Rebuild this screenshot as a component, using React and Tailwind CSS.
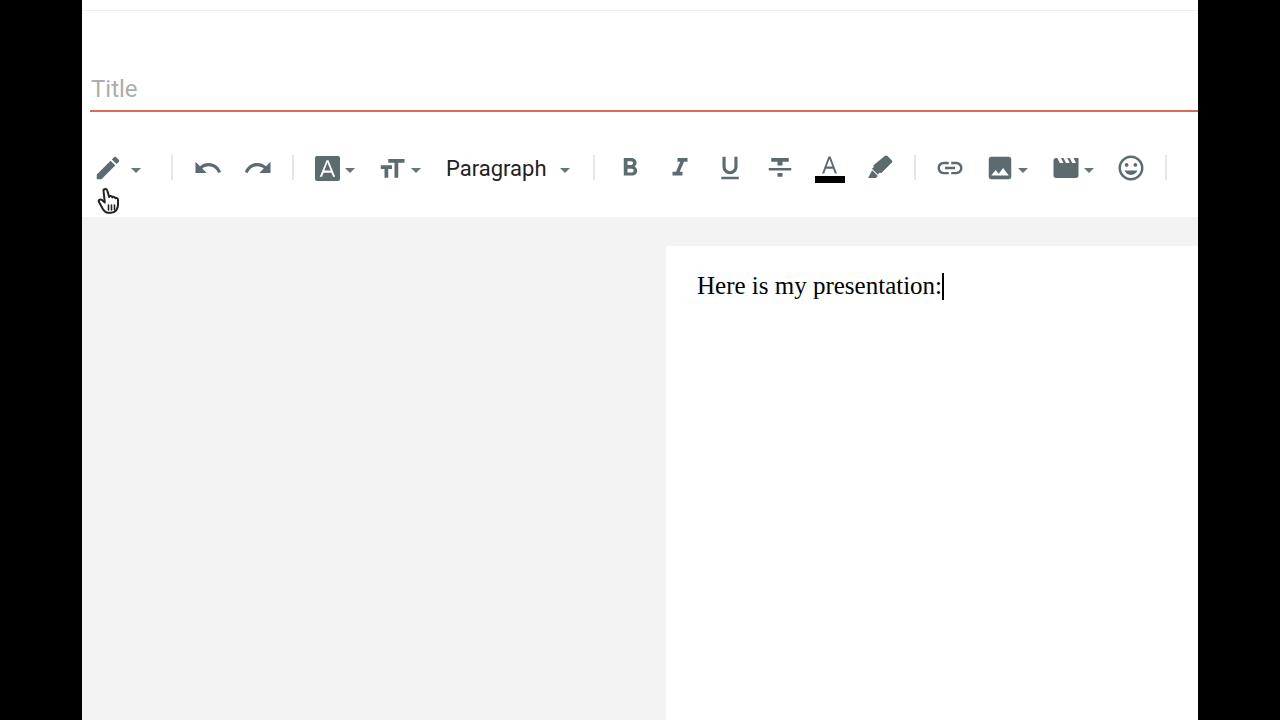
const ICON_COLOR = 'text-[#5b6b70]'

// material icon paths
const PATHS = {
  edit: 'M3 17.25V21h3.75L17.81 9.94l-3.75-3.75L3 17.25zM20.71 7.04c.39-.39.39-1.02 0-1.41l-2.34-2.34c-.39-.39-1.02-.39-1.41 0l-1.83 1.83 3.75 3.75 1.83-1.83z',
  undo: 'M12.5 8c-2.65 0-5.05.99-6.9 2.6L2 7v9h9l-3.62-3.62c1.39-1.16 3.16-1.88 5.12-1.88 3.54 0 6.55 2.31 7.6 5.5l2.37-.78C21.08 11.03 17.15 8 12.5 8z',
  redo: 'M18.4 10.6C16.55 8.99 14.15 8 11.5 8c-4.65 0-8.58 3.03-9.96 7.22L3.9 16c1.05-3.19 4.05-5.5 7.6-5.5 1.95 0 3.73.72 5.12 1.88L13 16h9V7l-3.6 3.6z',
  size: 'M9 4v3h5v12h3V7h5V4H9zm-6 8h3v7h3v-7h3V9H3v3z',
  bold: 'M15.6 10.79c.97-.67 1.65-1.77 1.65-2.79 0-2.26-1.75-4-4-4H7v14h7.04c2.09 0 3.71-1.7 3.71-3.79 0-1.52-.86-2.82-2.15-3.42zM10 6.5h3c.83 0 1.5.67 1.5 1.5s-.67 1.5-1.5 1.5h-3v-3zm3.5 9H10v-3h3.5c.83 0 1.5.67 1.5 1.5s-.67 1.5-1.5 1.5z',
  italic: 'M10 4v3h2.21l-3.42 8H6v3h8v-3h-2.21l3.42-8H18V4z',
  underline: 'M12 17c3.31 0 6-2.69 6-6V3h-2.5v8c0 1.93-1.57 3.5-3.5 3.5S8.5 12.93 8.5 11V3H6v8c0 3.31 2.69 6 6 6zm-7 2v2h14v-2H5z',
  strike: 'M10 19h4v-3h-4v3zM5 4v3h5v3h4V7h5V4H5zM3 14h18v-2H3v2z',
  marker: 'M18.2 2.6l3.3 3.3c.5.5.5 1.2 0 1.7l-8.4 8.4-1.5-.2-1.4 1.4-4.6-4.6 1.4-1.4-.2-1.5 8.7-7.1c.8-.7 1.900-.8 2.700 0zM5.700 13.800l4.600 4.600-1.600 1.600H2.500l3.200-6.200z',
  link: 'M3.9 12c0-1.71 1.39-3.1 3.1-3.1h4V7H7c-2.76 0-5 2.24-5 5s2.24 5 5 5h4v-1.9H7c-1.71 0-3.1-1.39-3.1-3.1zM8 13h8v-2H8v2zm9-6h-4v1.9h4c1.71 0 3.1 1.39 3.1 3.1s-1.39 3.1-3.1 3.1h-4V17h4c2.76 0 5-2.24 5-5s-2.24-5-5-5z',
  image: 'M21 19V5c0-1.1-.9-2-2-2H5c-1.1 0-2 .9-2 2v14c0 1.1.9 2 2 2h14c1.1 0 2-.9 2-2zM8.5 13.5l2.5 3.01L14.5 12l4.5 6H5l3.5-4.5z',
  movie: 'M18 4l2 4h-3l-2-4h-2l2 4h-3l-2-4H8l2 4H7L5 4H4c-1.1 0-1.99.9-1.99 2L2 18c0 1.1.9 2 2 2h16c1.1 0 2-.9 2-2V4h-4z',
  smile: 'M11.99 2C6.47 2 2 6.48 2 12s4.47 10 9.99 10C17.52 22 22 17.52 22 12S17.52 2 11.99 2zM12 20c-4.42 0-8-3.58-8-8s3.58-8 8-8 8 3.58 8 8-3.58 8-8 8zm3.5-9c.83 0 1.5-.67 1.5-1.5S16.33 8 15.5 8 14 8.67 14 9.5s.67 1.5 1.5 1.5zm-7 0c.83 0 1.5-.67 1.5-1.5S9.33 8 8.5 8 7 8.67 7 9.5 7.67 11 8.5 11zm3.5 6.500c2.330 0 4.310-1.460 5.110-3.500H6.890c.800 2.040 2.780 3.500 5.110 3.500z',
}

function Icon({ name, className = 'w-[30px] h-[30px]' }) {
  return (
    <svg viewBox="0 0 24 24" fill="currentColor" className={`${className} shrink-0 ${ICON_COLOR}`}>
      <path d={PATHS[name]} />
    </svg>
  )
}

function Caret({ className = '' }) {
  return <span className={`mt-[6px] w-0 h-0 shrink-0 border-x-[5px] border-x-transparent border-t-[5px] border-t-[#66757a] ${className}`} />
}

function Sep() {
  return <span className="w-0.5 h-[25px] bg-[#e6e6e6] shrink-0" />
}

function Btn({ name }) {
  return (
    <span className="w-[50px] flex justify-center shrink-0">
      <Icon name={name} />
    </span>
  )
}

function FontColorIcon() {
  return (
    <span className="w-[50px] flex flex-col items-center shrink-0 mt-1">
      <svg viewBox="0 0 16 16" className={`w-[17px] h-[18px] ${ICON_COLOR}`} fill="currentColor">
        <path d="M7 0L1 16h2l1.6-4.5h6.8L13 16h2L9 0H7zM5.300 9.500L8 2.300l2.700 7.200H5.300z" />
      </svg>
      <span className="w-[30px] h-[7px] mt-[2px] bg-black" />
    </span>
  )
}

function BoxedA() {
  return (
    <svg viewBox="0 0 26 26" className={`w-[25px] h-[25px] shrink-0 mt-0.5 ${ICON_COLOR}`}>
      <rect width="26" height="26" rx="2" fill="currentColor" />
      <path fill="#fff" d="M12 4.500L5 21.500h2.300l1.600-4.200h8.200l1.600 4.200H21L14 4.500h-2zM9.700 15.200L13 6.800l3.300 8.400H9.700z" />
    </svg>
  )
}

function HandCursor() {
  return (
    <svg viewBox="0 0 24 28" className="absolute left-[97px] top-[187px] w-6 h-7" fill="#fff" stroke="#222" strokeWidth="2" strokeLinejoin="round" strokeLinecap="round">
      <path d="M6.500 3.500c0-2 3.300-2 3.800 0l1.800 6.500c.6-1.500 3-1.200 3.200.5.7-1.200 2.900-.8 3 .8.800-.8 2.700-.3 2.700 1.500v5c0 4-2.500 8-7 8h-3c-2.500 0-3.500-1.200-5-3.500L2 15c-1-1.500 1-3.500 3-2l2.800 2.500L6.500 3.500z" />
      <path d="M11.500 18v5M14.500 18v5M17.500 18v5" fill="none" strokeWidth="1.600" />
    </svg>
  )
}

export default function App() {
  return (
    <div className="relative w-[1280px] h-[720px] overflow-hidden bg-black font-['Roboto',sans-serif]">
      <div className="ml-[82px] w-[1116px] h-full bg-white flex flex-col">
        {/* top bar edge */}
        <div className="h-[11px] shrink-0 border-b border-[#efefef]" />

        {/* title */}
        <div className="ml-2 h-[101px] shrink-0 border-b-2 border-[#d9695a] flex items-end pb-[6px] pl-px">
          <span className="text-[24px] leading-[30px] text-[#adadad]">Title</span>
        </div>

        {/* toolbar */}
        <div className="h-[105px] shrink-0 pt-[42px]">
          <div className="h-[27px] flex items-center">
            <div className="w-[89px] pl-[11px] flex items-center shrink-0">
              <Icon name="edit" />
              <Caret className="ml-2" />
            </div>
            <Sep />
            <div className="w-[119px] flex items-center justify-center shrink-0">
              <Btn name="undo" />
              <Btn name="redo" />
            </div>
            <Sep />
            <div className="w-[299px] pl-[21px] flex items-center shrink-0">
              <BoxedA />
              <Caret className="ml-[5px]" />
              <Icon name="size" className="w-[30px] h-[30px] ml-[22px] mt-0.5" />
              <Caret className="ml-1" />
              <span className="ml-[25px] mt-0.5 text-[22px] leading-[27px] text-[#222]">Paragraph</span>
              <Caret className="ml-[13px]" />
            </div>
            <Sep />
            <div className="w-[319px] flex items-center justify-center shrink-0">
              <Btn name="bold" />
              <Btn name="italic" />
              <Btn name="underline" />
              <Btn name="strike" />
              <FontColorIcon />
              <Btn name="marker" />
            </div>
            <Sep />
            <div className="w-[249px] pl-[19px] flex items-center shrink-0">
              <Icon name="link" />
              <Icon name="image" className="w-[30px] h-[30px] ml-5" />
              <Caret className="ml-[3px]" />
              <Icon name="movie" className="w-[30px] h-[30px] ml-[23px]" />
              <Caret className="ml-[3px]" />
              <Icon name="smile" className="w-[30px] h-[30px] ml-[22px]" />
            </div>
            <Sep />
          </div>
        </div>

        {/* editor area */}
        <div className="flex-1 bg-[#f3f3f3] pt-[29px] pl-[584px]">
          <div className="h-full bg-white pl-[31px] pt-[22px]">
            <p className="font-['Liberation_Serif',serif] text-[25px] leading-[36px] text-black">
              Here is my presentation:<span className="inline-block w-0.5 h-[27px] -mb-[6px] bg-black" />
            </p>
          </div>
        </div>
      </div>

      {/* mouse cursor */}
      <HandCursor />
    </div>
  )
}
